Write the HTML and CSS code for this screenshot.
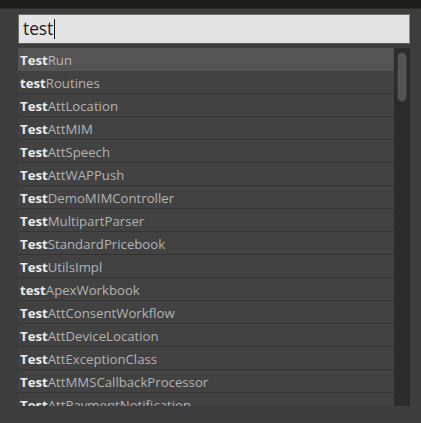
FILE: index.html
```html
<!DOCTYPE html>
<html>
<head>
<meta charset="utf-8">
<link rel="stylesheet" href="styles.css">
</head>
<body>
<div class="topbar"></div>
<div class="panel">
  <div class="search"><span class="query">test</span><span class="caret"></span></div>
  <div class="list">
    <div class="rows">
      <div class="row selected"><b>Test</b>Run</div>
      <div class="row"><b>test</b>Routines</div>
      <div class="row"><b>Test</b>AttLocation</div>
      <div class="row"><b>Test</b>AttMIM</div>
      <div class="row"><b>Test</b>AttSpeech</div>
      <div class="row"><b>Test</b>AttWAPPush</div>
      <div class="row"><b>Test</b>DemoMIMController</div>
      <div class="row"><b>Test</b>MultipartParser</div>
      <div class="row"><b>Test</b>StandardPricebook</div>
      <div class="row"><b>Test</b>UtilsImpl</div>
      <div class="row"><b>test</b>ApexWorkbook</div>
      <div class="row"><b>Test</b>AttConsentWorkflow</div>
      <div class="row"><b>Test</b>AttDeviceLocation</div>
      <div class="row"><b>Test</b>AttExceptionClass</div>
      <div class="row"><b>Test</b>AttMMSCallbackProcessor</div>
      <div class="row"><b>Test</b>AttPaymentNotification</div>
    </div>
    <div class="scrollbar"><div class="thumb"></div></div>
  </div>
</div>
</body>
</html>
```
FILE: styles.css
```css
html, body {
  margin: 0;
  padding: 0;
  background: #3d3d3d;
  width: 421px;
  height: 423px;
  overflow: hidden;
  font-family: "Open Sans", "Noto Sans", sans-serif;
}
.topbar {
  height: 8px;
  background: #1c1c1a;
  border-bottom: 1px solid #2b2b2b;
}
.panel {
  padding: 5px 11px 0 18px;
}
.search {
  box-sizing: border-box;
  height: 30px;
  background: #e4e4e4;
  border: 1px solid #6e6e6e;
  border-right-color: #8c8c8c;
  border-bottom-color: #5a5a5a;
  display: flex;
  align-items: center;
  padding-left: 4px;
  font-size: 17.3px;
  color: #1a1a1a;
}
.query {
  line-height: 20px;
}
.caret {
  width: 1px;
  height: 20px;
  background: #111;
  margin-left: 1px;
}
.list {
  margin-top: 4px;
  height: 358px;
  display: flex;
  overflow: hidden;
}
.rows {
  flex: 1;
  overflow: hidden;
}
.row {
  box-sizing: border-box;
  height: 23px;
  line-height: 22px;
  padding-top: 1px;
  padding-left: 2px;
  font-size: 13.2px;
  color: #b3b3b3;
  background: #424242;
  border-bottom: 1px solid #343434;
  white-space: nowrap;
}
.row b {
  color: #ececec;
  font-weight: 700;
}
.row.selected {
  background: #545454;
  border-bottom-color: #545454;
  color: #b8b8b8;
}
.scrollbar {
  width: 16px;
  background: #2c2c2c;
  padding: 4px 3px 0 3px;
  box-sizing: border-box;
}
.thumb {
  height: 50px;
  background: #545454;
  border: 1px solid #3a3a3a;
  border-radius: 5px;
  box-sizing: border-box;
}
```
